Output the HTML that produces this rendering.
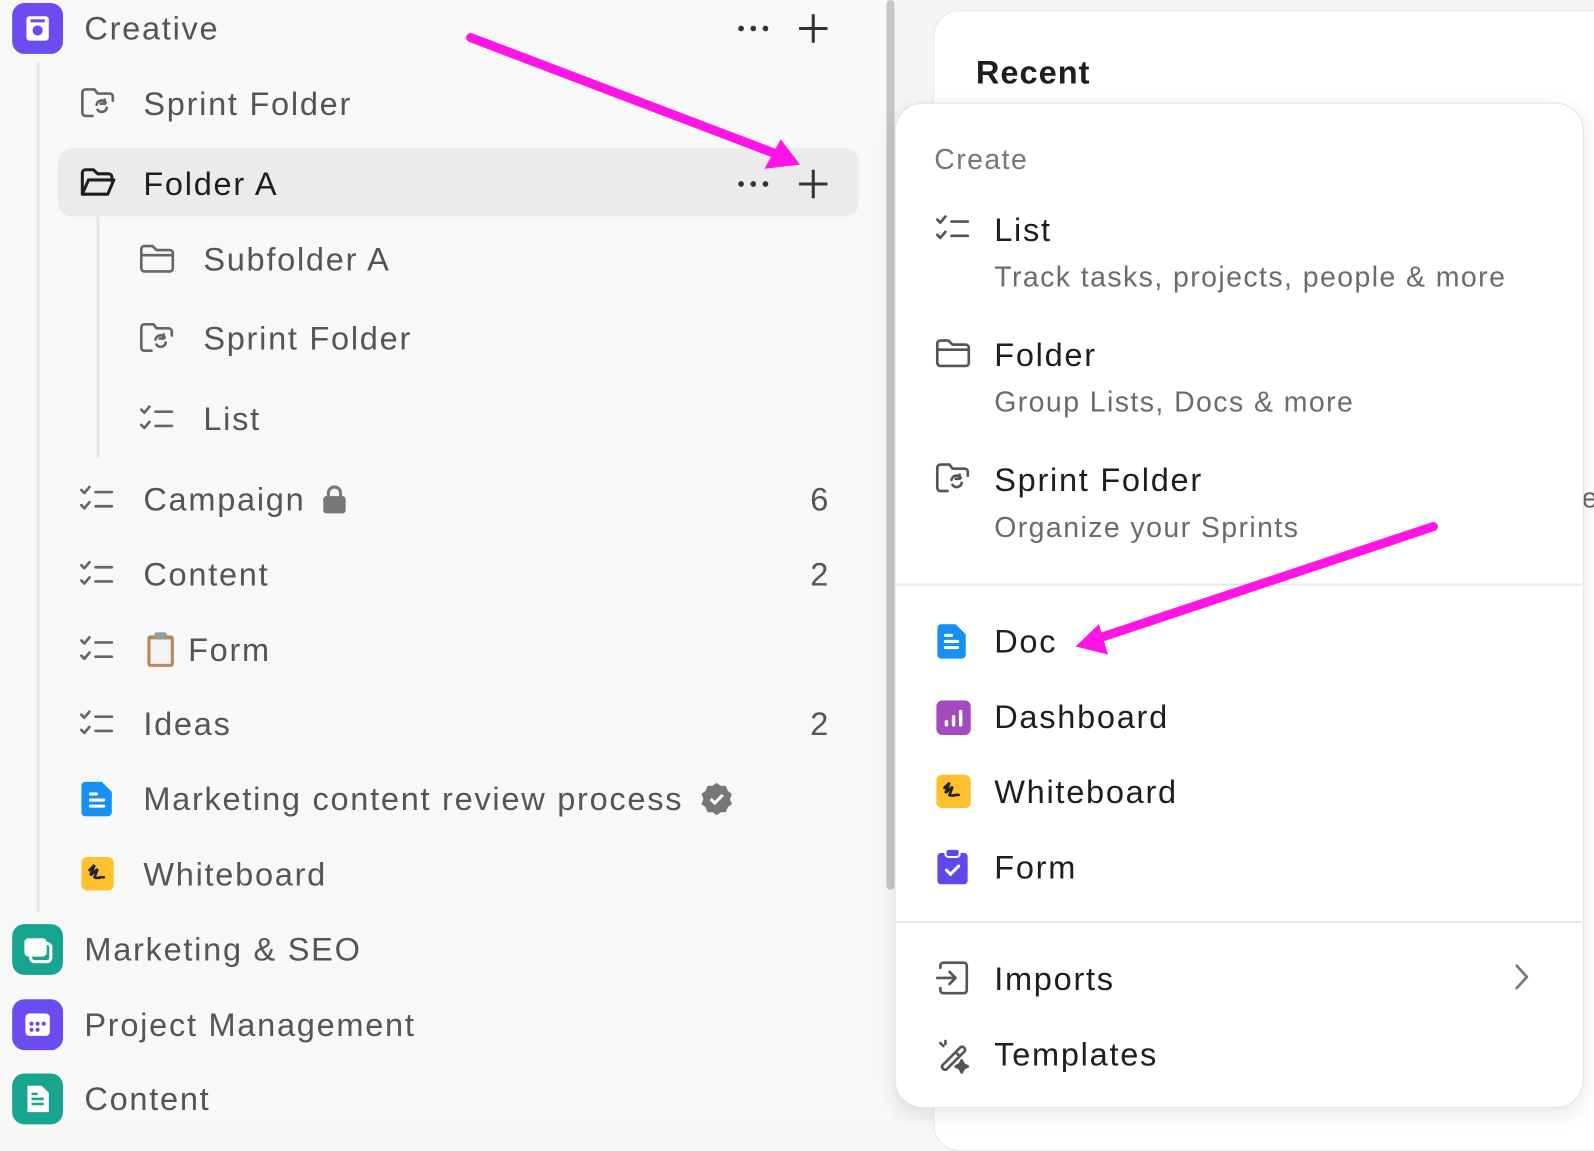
<!DOCTYPE html>
<html><head><meta charset="utf-8"><style>
html,body{margin:0;padding:0;width:1594px;height:1120px;overflow:hidden;background:#f7f7f7}
#w{position:absolute;left:0;top:0;width:1568px;height:1102px;transform:scale(1.01658);transform-origin:0 0;font-family:"Liberation Sans",sans-serif}
.t{position:absolute;white-space:nowrap;line-height:1;transform:translateY(-50%);letter-spacing:1.7px}
.s{font-size:32px;color:#555}
.m{font-size:32px;color:#1e1e1e}
.sub{font-size:28px;color:#6b6b6b;letter-spacing:1.4px}
.ic{position:absolute}
</style></head><body><div id="w">
<!-- sidebar -->
<div style="position:absolute;left:0;top:0;width:872px;height:1102px;background:#f8f8f8"></div>
<div style="position:absolute;left:872px;top:0;width:8px;height:875px;background:#c6c6c6;border-radius:4px"></div>
<div style="position:absolute;left:880px;top:0;width:688px;height:1102px;background:#f5f5f5"></div>
<div style="position:absolute;left:918px;top:10px;width:700px;height:1120px;background:#fff;border:1px solid #e6e6e6;border-radius:26px"></div>
<div class="t" style="left:960px;top:71px;font-size:32px;font-weight:bold;color:#1e1e1e;letter-spacing:1px">Recent</div>
<div class="t" style="left:1556px;top:490px;font-size:28px;color:#666">e</div>

<div style="position:absolute;left:36px;top:62px;width:3px;height:835px;background:#e6e6e6"></div>
<div style="position:absolute;left:57px;top:146px;width:788px;height:67px;background:#ebebeb;border-radius:14px"></div>
<div style="position:absolute;left:95px;top:213px;width:3px;height:237px;background:#e6e6e6"></div>

<!-- space icons -->
<div class="ic" style="left:12px;top:3px;width:50px;height:50px;background:#6a4cf0;border-radius:12px"><svg width="50" height="50"><rect x="14" y="13" width="22" height="24" rx="3" fill="#fff"/><circle cx="25" cy="27" r="5" fill="#6a4cf0"/><rect x="18" y="16" width="14" height="3" fill="#6a4cf0"/></svg></div>
<div class="ic" style="left:12px;top:909px;width:50px;height:50px;background:#17a58f;border-radius:12px"><svg width="50" height="50"><rect x="12" y="14" width="22" height="18" rx="4" fill="#fff"/><rect x="18" y="19" width="20" height="18" rx="4" fill="none" stroke="#fff" stroke-width="3"/></svg></div>
<div class="ic" style="left:12px;top:983px;width:50px;height:50px;background:#6a4cf0;border-radius:12px"><svg width="50" height="50"><rect x="13" y="14" width="24" height="22" rx="4" fill="#fff"/><g fill="#6a4cf0"><circle cx="19" cy="24" r="2"/><circle cx="25" cy="24" r="2"/><circle cx="31" cy="24" r="2"/><circle cx="19" cy="30" r="2"/><circle cx="25" cy="30" r="2"/></g></svg></div>
<div class="ic" style="left:12px;top:1056px;width:50px;height:50px;background:#17a58f;border-radius:12px"><svg width="50" height="50"><path d="M15 12h14l7 7v19H15z" fill="#fff"/><g stroke="#17a58f" stroke-width="2.5"><path d="M19 25h12M19 30h12M19 20h6"/></g></svg></div>

<div class="t s" style="left:83px;top:28px">Creative</div>
<div class="t s" style="left:83px;top:934px">Marketing &amp; SEO</div>
<div class="t s" style="left:83px;top:1008px">Project Management</div>
<div class="t s" style="left:83px;top:1081px">Content</div>

<!-- dots/plus -->
<svg class="ic" style="left:720px;top:10px" width="100" height="190"><g fill="#333"><circle cx="9" cy="18" r="2.8"/><circle cx="21" cy="18" r="2.8"/><circle cx="33" cy="18" r="2.8"/><circle cx="9" cy="171" r="2.8"/><circle cx="21" cy="171" r="2.8"/><circle cx="33" cy="171" r="2.8"/></g><g stroke="#333" stroke-width="3"><path d="M80 4v28M66 18h28M80 157v28M66 171h28"/></g></svg>

<!-- sidebar row icons -->
<svg class="ic" style="left:0;top:0" width="880" height="900" fill="none" stroke="#666" stroke-width="2.6" stroke-linecap="round" stroke-linejoin="round">
<defs>
<g id="sp"><path d="M10 0H3a3 3 0 0 0-3 3v20a3 3 0 0 0 3 3h7M4 0h8l3 4h12a3 3 0 0 1 3 3v4"/><path d="M14 15a5 5 0 0 1 9-2m1 5a5 5 0 0 1-9 2M22 10v4h-4M17 22"/></g>
<g id="fo"><path d="M0 4a3 3 0 0 1 3-3h8l4 4h13a3 3 0 0 1 3 3v15a3 3 0 0 1-3 3H3a3 3 0 0 1-3-3zM0 10h31"/></g>
<g id="li"><path d="M0 3l3 3 5-6M0 18l3 3 5-6M14 5h16M14 19h16"/></g>
</defs>
<use href="#sp" x="81" y="88"/>
<use href="#sp" x="139" y="319"/>
<use href="#fo" x="139" y="241"/>
<use href="#li" x="139" y="400"/>
<use href="#li" x="80" y="479"/>
<use href="#li" x="80" y="553"/>
<use href="#li" x="80" y="627"/>
<use href="#li" x="80" y="700"/>
<path d="M81 170a3 3 0 0 1 3-3h8l4 4h11a3 3 0 0 1 3 3v4M81 170v21h25l6-14H87l-6 14" stroke="#1e1e1e" stroke-width="3"/>
</svg>
<div class="t m" style="left:141px;top:181px">Folder A</div>
<div class="t s" style="left:141px;top:102px">Sprint Folder</div>
<div class="t s" style="left:200px;top:255px">Subfolder A</div>
<div class="t s" style="left:200px;top:333px">Sprint Folder</div>
<div class="t s" style="left:200px;top:412px">List</div>
<div class="t s" style="left:141px;top:491px">Campaign</div>
<svg class="ic" style="left:316px;top:476px" width="26" height="30"><rect x="2" y="12" width="22" height="17" rx="3" fill="#777"/><path d="M7 13V9a6 6 0 0 1 12 0v4" stroke="#777" stroke-width="3" fill="none"/></svg>
<div class="t s" style="left:797px;top:491px">6</div>
<div class="t s" style="left:141px;top:565px">Content</div>
<div class="t s" style="left:797px;top:565px">2</div>
<svg class="ic" style="left:143px;top:621px" width="30" height="36"><rect x="2" y="4" width="26" height="31" rx="3" fill="#b5875a"/><rect x="5" y="8" width="20" height="24" fill="#f3f3f3"/><rect x="9" y="1" width="12" height="7" rx="2" fill="#999"/></svg>
<div class="t s" style="left:185px;top:639px">Form</div>
<div class="t s" style="left:141px;top:712px">Ideas</div>
<div class="t s" style="left:797px;top:712px">2</div>
<svg class="ic" style="left:80px;top:769px" width="32" height="34"><path d="M4 0h16l10 10v20a4 4 0 0 1-4 4H4a4 4 0 0 1-4-4V4a4 4 0 0 1 4-4z" fill="#1690f5"/><g stroke="#fff" stroke-width="3" stroke-linecap="round"><path d="M9 12h6M9 18h13M9 24h13"/></g></svg>
<div class="t s" style="left:141px;top:786px">Marketing content review process</div>
<svg class="ic" style="left:688px;top:769px" width="34" height="34"><path d="M17 1l4 3 5 0 2 5 4 3-2 5 2 5-4 3-2 5-5 0-4 3-4-3-5 0-2-5-4-3 2-5-2-5 4-3 2-5 5 0z" fill="#777"/><path d="M11 17l4 4 8-8" stroke="#fff" stroke-width="3" fill="none"/></svg>
<svg class="ic" style="left:80px;top:843px" width="32" height="33"><rect width="32" height="33" rx="6" fill="#fec02f"/><path d="M8 13l5-5-4 10 7-6-3 8c3 2 6-1 9 0" stroke="#222" stroke-width="2.6" fill="none" stroke-linecap="round"/></svg>
<div class="t s" style="left:141px;top:860px">Whiteboard</div>

<!-- menu -->
<div style="position:absolute;left:880px;top:101px;width:676px;height:987px;background:#fff;border:1px solid #e3e3e3;border-radius:28px;box-shadow:0 6px 20px rgba(0,0,0,.1)"></div>
<div style="position:absolute;left:881px;top:574px;width:675px;height:2px;background:#e8e8e8"></div>
<div style="position:absolute;left:881px;top:906px;width:675px;height:2px;background:#e8e8e8"></div>
<div class="t sub" style="left:919px;top:157px;color:#777">Create</div>
<div class="t m" style="left:978px;top:226px">List</div>
<div class="t sub" style="left:978px;top:273px">Track tasks, projects, people &amp; more</div>
<div class="t m" style="left:978px;top:349px">Folder</div>
<div class="t sub" style="left:978px;top:396px">Group Lists, Docs &amp; more</div>
<div class="t m" style="left:978px;top:472px">Sprint Folder</div>
<div class="t sub" style="left:978px;top:519px">Organize your Sprints</div>
<div class="t m" style="left:978px;top:631px">Doc</div>
<div class="t m" style="left:978px;top:705px">Dashboard</div>
<div class="t m" style="left:978px;top:779px">Whiteboard</div>
<div class="t m" style="left:978px;top:853px">Form</div>
<div class="t m" style="left:978px;top:963px">Imports</div>
<div class="t m" style="left:978px;top:1037px">Templates</div>
<svg class="ic" style="left:0;top:0" width="1568" height="1102" fill="none" stroke="#555" stroke-width="2.6" stroke-linecap="round" stroke-linejoin="round">
<use href="#li" x="922" y="213"/>
<use href="#fo" x="922" y="334"/>
<use href="#sp" x="922" y="457"/>
<path d="M925 952v-2a3 3 0 0 1 3-3h20a3 3 0 0 1 3 3v24a3 3 0 0 1-3 3h-20a3 3 0 0 1-3-3v-2M922 962h17M934 956l6 6-6 6"/>
<path d="M1492 950l10 11-10 11" stroke="#777"/>
<path d="M927 1048l18-18a3 3 0 0 1 4 4l-18 18a3 3 0 0 1-4-4zM940 1035l4 4M925 1026l3 3M930 1024v3"/>
<path d="M946 1043l2 4 4 2-4 2-2 4-2-4-4-2 4-2z" fill="#555"/>
</svg>
<svg class="ic" style="left:922px;top:614px" width="32" height="34"><path d="M4 0h14l10 10v20a4 4 0 0 1-4 4H4a4 4 0 0 1-4-4V4a4 4 0 0 1 4-4z" fill="#1690f5"/><g stroke="#fff" stroke-width="3" stroke-linecap="round"><path d="M8 11h6M8 17h12M8 23h12"/></g></svg>
<svg class="ic" style="left:921px;top:689px" width="34" height="34"><rect width="34" height="34" rx="6" fill="#a34bbe"/><g stroke="#fff" stroke-width="3.4" stroke-linecap="round"><path d="M10 21v3M17 16v8M24 11v13"/></g></svg>
<svg class="ic" style="left:921px;top:762px" width="34" height="33"><rect width="34" height="33" rx="6" fill="#fec02f"/><path d="M8 13l5-5-4 10 7-6-3 8c3 2 6-1 9 0" stroke="#222" stroke-width="2.6" fill="none" stroke-linecap="round"/></svg>
<svg class="ic" style="left:922px;top:834px" width="30" height="36"><rect x="0" y="5" width="30" height="31" rx="4" fill="#5f48e8"/><rect x="8" y="1" width="14" height="8" rx="3" fill="#5f48e8" stroke="#fff" stroke-width="2"/><path d="M9 22l4 4 8-8" stroke="#fff" stroke-width="3" fill="none" stroke-linecap="round"/></svg>
<!-- arrows -->
<svg class="ic" style="left:0;top:0" width="1568" height="1102">
<path d="M463 37L765 152" stroke="#ff14e6" stroke-width="9" stroke-linecap="round"/>
<path d="M787 162L752 166L768 137z" fill="#ff14e6"/>
<path d="M1410 518L1080 628" stroke="#ff14e6" stroke-width="9" stroke-linecap="round"/>
<path d="M1058 636L1090 644L1081 614z" fill="#ff14e6"/>
</svg>
</div></body></html>
